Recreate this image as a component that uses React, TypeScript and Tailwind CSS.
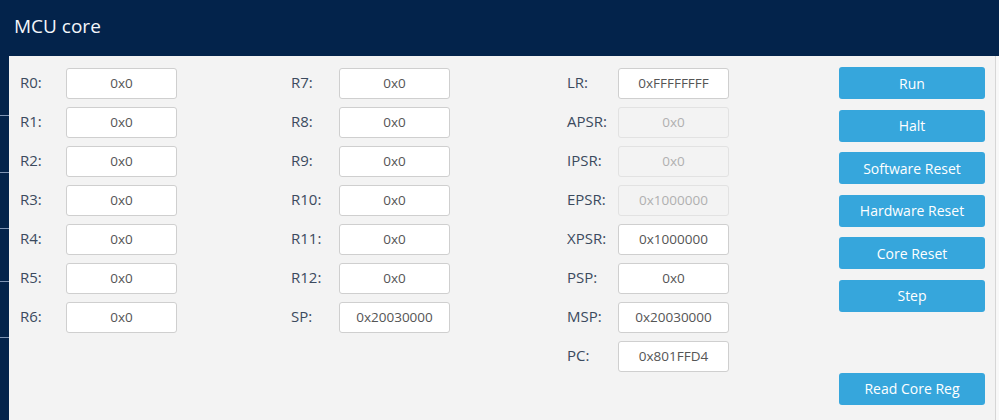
const col1 = ['R0', 'R1', 'R2', 'R3', 'R4', 'R5', 'R6']
const col2 = ['R7', 'R8', 'R9', 'R10', 'R11', 'R12', 'SP']

interface Reg {
  name: string
  value: string
  disabled?: boolean
}

const col3: Reg[] = [
  { name: 'LR', value: '0xFFFFFFFF' },
  { name: 'APSR', value: '0x0', disabled: true },
  { name: 'IPSR', value: '0x0', disabled: true },
  { name: 'EPSR', value: '0x1000000', disabled: true },
  { name: 'XPSR', value: '0x1000000' },
  { name: 'PSP', value: '0x0' },
  { name: 'MSP', value: '0x20030000' },
  { name: 'PC', value: '0x801FFD4' },
]

const buttons = ['Run', 'Halt', 'Software Reset', 'Hardware Reset', 'Core Reset', 'Step']

const RegRow = ({ reg, labelW }: { reg: Reg; labelW: string }) => (
  <div className="flex items-center h-[31px]">
    <span className={`${labelW} text-[15px] text-[#3b4a5e] -mt-[3px]`}>{reg.name}:</span>
    <div
      className={
        reg.disabled
          ? 'w-[111px] h-[31px] flex items-center justify-center rounded-[3px] border border-[#e2e2e2] bg-[#f3f3f3] text-[13.5px] text-[#b0b0b0]'
          : 'w-[111px] h-[31px] flex items-center justify-center rounded-[3px] border border-[#cfcfcf] bg-white text-[13.5px] text-[#555]'
      }
    >
      {reg.value}
    </div>
  </div>
)

const Button = ({ label }: { label: string }) => (
  <button className="w-[146px] h-[32px] rounded-[3px] bg-[#36a6dc] text-white text-[14px]">{label}</button>
)

const App = () => {
  return (
    <div className="w-[999px] h-[420px] flex flex-col overflow-hidden bg-[#03234b]" style={{ fontFamily: '"Open Sans", "Noto Sans", sans-serif' }}>
      <header className="h-[56px] shrink-0 flex items-center px-[14px] pb-[3px]">
        <h1 className="text-[19px] text-[#f4f6fa]">MCU core</h1>
      </header>
      <div className="flex flex-1">
        <div className="w-[9px] flex flex-col">
          <div className="h-[1px] mt-[59px] bg-[#7f95b5]" />
          <div className="h-[1px] mt-[56px] bg-[#7f95b5]" />
          <div className="h-[1px] mt-[55px] bg-[#7f95b5]" />
          <div className="h-[1px] mt-[52px] bg-[#7f95b5]" />
          <div className="h-[1px] mt-[55px] bg-[#7f95b5]" />
        </div>
        <main className="w-[987px] bg-[#f3f3f3] border-r border-[#d6d6d6] flex pt-[12px]">
          <div className="ml-[11px] flex flex-col gap-[8px]">
            {col1.map(r => (
              <RegRow key={r} reg={{ name: r, value: '0x0' }} labelW="w-[46px]" />
            ))}
          </div>
          <div className="ml-[114px] flex flex-col gap-[8px]">
            {col2.map(r => (
              <RegRow key={r} reg={{ name: r, value: r === 'SP' ? '0x20030000' : '0x0' }} labelW="w-[48px]" />
            ))}
          </div>
          <div className="ml-[117px] flex flex-col gap-[8px]">
            {col3.map(r => (
              <RegRow key={r.name} reg={r} labelW="w-[51px]" />
            ))}
          </div>
          <div className="ml-[110px] -mt-[1px] flex flex-col gap-[10.6px]">
            {buttons.map(b => (
              <Button key={b} label={b} />
            ))}
            <div className="mt-[50px]">
              <Button label="Read Core Reg" />
            </div>
          </div>
        </main>
        <div className="flex-1 bg-[#f8f8f8]" />
      </div>
    </div>
  )
}

export default App
